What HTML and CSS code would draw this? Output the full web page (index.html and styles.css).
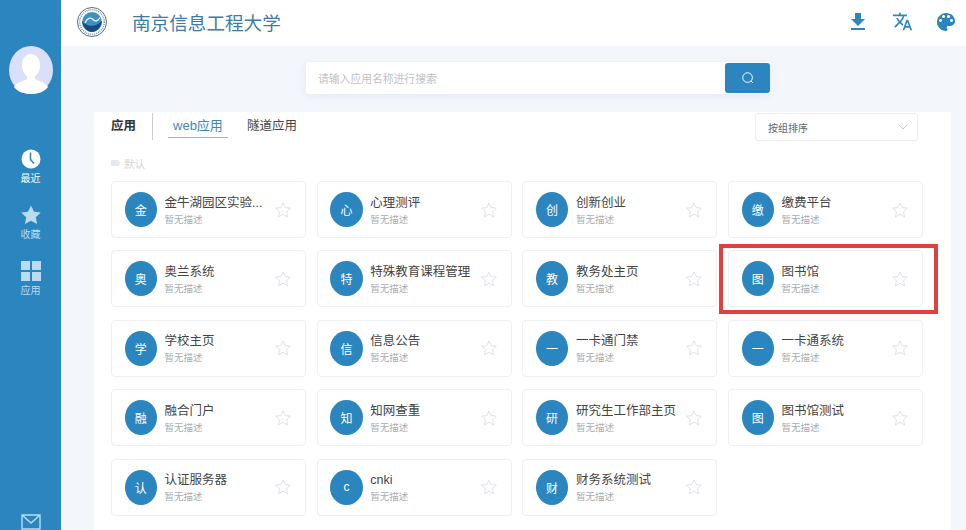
FILE: index.html
```html
<!DOCTYPE html>
<html lang="zh-CN">
<head>
  <meta charset="UTF-8" />
  <title>南京信息工程大学</title>
  <link rel="stylesheet" href="styles.css">
</head>
<body>
  <svg class="defs" width="0" height="0">
    <symbol id="star" viewBox="0 0 24 24">
      <path d="M12 2.5l2.9 6.3 6.9.8-5.1 4.7 1.4 6.8-6.1-3.4-6.1 3.4 1.4-6.8-5.1-4.7 6.9-.8z" fill="none" stroke="#dcdfe4" stroke-width="1.3" stroke-linejoin="round"/>
    </symbol>
  </svg>

  <div class="app">
    <aside class="sidebar">
      <div class="avatar">
        <svg viewBox="0 0 44 48" width="44" height="48">
          <ellipse cx="22" cy="24" rx="22" ry="24" fill="#dbe0fa"/>
          <path d="M22 8c-6 0-9 5-9 11 0 5 2 9 5 11v3c-3 2-10 3-13 8 4 5 10 7 17 7s13-2 17-7c-3-5-10-6-13-8v-3c3-2 5-6 5-11 0-6-3-11-9-11z" fill="#fff"/>
        </svg>
      </div>
      <nav class="side-nav">
        <a class="side-item">
          <svg viewBox="0 0 20 20" width="20" height="20">
            <circle cx="10" cy="10" r="9.5" fill="#fff"/>
            <path d="M9.5 3.5v7l3.5 4" fill="none" stroke="#2b86c0" stroke-width="1.5"/>
          </svg>
          <span>最近</span>
        </a>
        <a class="side-item light">
          <svg viewBox="0 0 20 20" width="20" height="20">
            <path d="M10 .5l3 6.2 6.8.9-5 4.7 1.3 6.7-6.1-3.3-6.1 3.3 1.3-6.7-5-4.7 6.8-.9z" fill="#b9dcf3"/>
          </svg>
          <span>收藏</span>
        </a>
        <a class="side-item light">
          <svg viewBox="0 0 20 20" width="20" height="20">
            <path d="M0 0h9v9H0zM11 0h9v9h-9zM0 11h9v9H0zM11 11h9v9h-9z" fill="#b9dcf3"/>
          </svg>
          <span>应用</span>
        </a>
      </nav>
      <a class="side-mail">
        <svg viewBox="0 0 20 16" width="20" height="16">
          <path d="M1 1h18v14H1zM1 1l9 8 9-8" fill="none" stroke="#b9dcf3" stroke-width="1.4"/>
        </svg>
      </a>
    </aside>

    <div class="main">
      <header class="topbar">
        <div class="brand">
          <svg class="logo" viewBox="0 0 30 30" width="30" height="30">
            <circle cx="15" cy="15" r="14.5" fill="#fff" stroke="#5a6b7b"/>
            <circle cx="15" cy="15" r="12.3" fill="none" stroke="#7f95a8" stroke-width="1.5" stroke-dasharray="1 1"/>
            <circle cx="15" cy="15" r="10" fill="#3f8fc2"/>
            <path d="M5.2 14c4 6 14 6.5 19.6 0-.6 6-4.8 11-9.8 11S5.600 20 5.200 14z" fill="#174a80"/>
            <path d="M8 16c2-5 6-6 8-3.5s5 1.500 7-2" fill="none" stroke="#e2f3fa" stroke-width="1.4"/>
          </svg>
          <h1>南京信息工程大学</h1>
        </div>
        <div class="top-icons">
          <svg viewBox="0 0 24 24" width="24" height="24"><path d="M19 9h-4V3H9v6H5l7 7 7-7zM5 18v2h14v-2H5z"/></svg>
          <svg class="translate" viewBox="0 0 24 24" width="21" height="21"><path d="M12.87 15.07l-2.54-2.51.03-.03c1.74-1.94 2.98-4.17 3.71-6.53H17V4h-7V2H8v2H1v1.99h11.17C11.5 7.92 10.44 9.75 9 11.35 8.07 10.32 7.3 9.19 6.69 8h-2c.73 1.63 1.73 3.17 2.98 4.56l-5.09 5.02L4 19l5-5 3.11 3.11.76-2.04zM18.5 10h-2L12 22h2l1.12-3h4.75L21 22h2l-4.5-12zm-2.62 7l1.62-4.33L19.12 17h-3.24z"/></svg>
          <svg viewBox="0 0 24 24" width="24" height="24"><path d="M12 3c-4.97 0-9 4.03-9 9s4.03 9 9 9c.83 0 1.5-.67 1.5-1.5 0-.39-.15-.74-.39-1.01-.23-.26-.38-.61-.38-.99 0-.83.67-1.5 1.5-1.5H16c2.76 0 5-2.24 5-5 0-4.42-4.03-8-9-8zm-5.5 9c-.83 0-1.5-.67-1.5-1.5S5.67 9 6.5 9 8 9.67 8 10.5 7.33 12 6.5 12zm3-4C8.67 8 8 7.33 8 6.5S8.67 5 9.5 5s1.5.67 1.5 1.5S10.33 8 9.5 8zm5 0c-.83 0-1.5-.67-1.5-1.5S13.67 5 14.5 5s1.5.67 1.5 1.5S15.33 8 14.5 8zm3 4c-.83 0-1.5-.67-1.5-1.5S16.67 9 17.5 9s1.5.67 1.5 1.5-.67 1.5-1.5 1.5z"/></svg>
        </div>
      </header>

      <div class="search-row">
        <div class="search-box">
          <span class="placeholder">请输入应用名称进行搜索</span>
          <button class="search-btn" type="button">
            <svg viewBox="0 0 16 16" width="14" height="14">
              <circle cx="7.5" cy="7.5" r="5.5" fill="none" stroke="#fff" stroke-width="1.1"/>
              <path d="M11.5 11.5l2 2" stroke="#fff" stroke-width="1.1"/>
            </svg>
          </button>
        </div>
      </div>

      <section class="panel">
        <div class="tabs">
          <span class="tabs-title">应用</span>
          <span class="tab active">web应用</span>
          <span class="tab">隧道应用</span>
          <div class="sort-select">
            <span>按组排序</span>
            <svg viewBox="0 0 10 6" width="10" height="6"><path d="M.5.5L5 5 9.5.5" fill="none" stroke="#c4c8ce"/></svg>
          </div>
        </div>

        <div class="group-label">
          <svg viewBox="0 0 10 6" width="10" height="6"><path d="M0 0h7l3 3-3 3H0z" fill="#e6e8eb"/></svg>
          默认
        </div>

        <div class="card-grid">
          <div class="card"><span class="badge">金</span><div class="card-text"><div class="card-title">金牛湖园区实验...</div><div class="card-desc">暂无描述</div></div><svg class="star"><use href="#star"/></svg></div>
          <div class="card"><span class="badge">心</span><div class="card-text"><div class="card-title">心理测评</div><div class="card-desc">暂无描述</div></div><svg class="star"><use href="#star"/></svg></div>
          <div class="card"><span class="badge">创</span><div class="card-text"><div class="card-title">创新创业</div><div class="card-desc">暂无描述</div></div><svg class="star"><use href="#star"/></svg></div>
          <div class="card"><span class="badge">缴</span><div class="card-text"><div class="card-title">缴费平台</div><div class="card-desc">暂无描述</div></div><svg class="star"><use href="#star"/></svg></div>

          <div class="card"><span class="badge">奥</span><div class="card-text"><div class="card-title">奥兰系统</div><div class="card-desc">暂无描述</div></div><svg class="star"><use href="#star"/></svg></div>
          <div class="card"><span class="badge">特</span><div class="card-text"><div class="card-title">特殊教育课程管理</div><div class="card-desc">暂无描述</div></div><svg class="star"><use href="#star"/></svg></div>
          <div class="card"><span class="badge">教</span><div class="card-text"><div class="card-title">教务处主页</div><div class="card-desc">暂无描述</div></div><svg class="star"><use href="#star"/></svg></div>
          <div class="card highlighted"><span class="badge">图</span><div class="card-text"><div class="card-title">图书馆</div><div class="card-desc">暂无描述</div></div><svg class="star"><use href="#star"/></svg></div>

          <div class="card"><span class="badge">学</span><div class="card-text"><div class="card-title">学校主页</div><div class="card-desc">暂无描述</div></div><svg class="star"><use href="#star"/></svg></div>
          <div class="card"><span class="badge">信</span><div class="card-text"><div class="card-title">信息公告</div><div class="card-desc">暂无描述</div></div><svg class="star"><use href="#star"/></svg></div>
          <div class="card"><span class="badge">一</span><div class="card-text"><div class="card-title">一卡通门禁</div><div class="card-desc">暂无描述</div></div><svg class="star"><use href="#star"/></svg></div>
          <div class="card"><span class="badge">一</span><div class="card-text"><div class="card-title">一卡通系统</div><div class="card-desc">暂无描述</div></div><svg class="star"><use href="#star"/></svg></div>

          <div class="card"><span class="badge">融</span><div class="card-text"><div class="card-title">融合门户</div><div class="card-desc">暂无描述</div></div><svg class="star"><use href="#star"/></svg></div>
          <div class="card"><span class="badge">知</span><div class="card-text"><div class="card-title">知网查重</div><div class="card-desc">暂无描述</div></div><svg class="star"><use href="#star"/></svg></div>
          <div class="card"><span class="badge">研</span><div class="card-text"><div class="card-title">研究生工作部主页</div><div class="card-desc">暂无描述</div></div><svg class="star"><use href="#star"/></svg></div>
          <div class="card"><span class="badge">图</span><div class="card-text"><div class="card-title">图书馆测试</div><div class="card-desc">暂无描述</div></div><svg class="star"><use href="#star"/></svg></div>

          <div class="card"><span class="badge">认</span><div class="card-text"><div class="card-title">认证服务器</div><div class="card-desc">暂无描述</div></div><svg class="star"><use href="#star"/></svg></div>
          <div class="card"><span class="badge">c</span><div class="card-text"><div class="card-title">cnki</div><div class="card-desc">暂无描述</div></div><svg class="star"><use href="#star"/></svg></div>
          <div class="card"><span class="badge">财</span><div class="card-text"><div class="card-title">财务系统测试</div><div class="card-desc">暂无描述</div></div><svg class="star"><use href="#star"/></svg></div>
        </div>
      </section>
    </div>
  </div>
</body>
</html>
```

FILE: styles.css
```css
* {
  box-sizing: border-box;
}

html,
body {
  margin: 0;
  padding: 0;
  height: 100%;
  overflow: hidden;
}

body {
  font-family: "Liberation Sans", "Noto Sans CJK SC", sans-serif;
  background: #f3f6fb;
  color: #444;
}

.defs {
  position: absolute;
}

.app {
  display: flex;
  height: 530px;
  overflow: hidden;
}

/* sidebar */
.sidebar {
  width: 61px;
  flex-shrink: 0;
  background: #2b86c0;
  display: flex;
  flex-direction: column;
  align-items: center;
  padding-top: 46px;
}

.avatar {
  height: 48px;
  width: 44px;
}

.side-nav {
  display: flex;
  flex-direction: column;
  gap: 19px;
  margin-top: 55px;
}

.side-item {
  display: flex;
  flex-direction: column;
  align-items: center;
  gap: 3px;
  font-size: 10px;
  line-height: 14px;
  color: #fff;
}

.side-item.light {
  color: #b9dcf3;
}

.side-mail {
  margin-top: 216px;
  height: 16px;
}

/* header */
.main {
  flex: 1;
  min-width: 0;
}

.topbar {
  height: 46px;
  background: #fff;
  display: flex;
  align-items: center;
  justify-content: space-between;
  padding: 0 8px 3px 16px;
}

.brand {
  display: flex;
  align-items: center;
  gap: 25px;
}

.logo {
  display: block;
}

.brand h1 {
  margin: 0;
  font-size: 18.6px;
  font-weight: 400;
  color: #3e7ba8;
}

.top-icons {
  display: flex;
  align-items: center;
  gap: 20px;
}

.top-icons svg {
  fill: #2b86c0;
  display: block;
}

.top-icons .translate {
  margin: 0 1.5px;
}

/* search */
.search-row {
  height: 66px;
  padding: 16px 0 0 245px;
}

.search-box {
  width: 464px;
  height: 32px;
  background: #fff;
  border-radius: 3px;
  box-shadow: 0 2px 8px rgba(120, 140, 180, 0.12);
  display: flex;
  align-items: center;
  justify-content: space-between;
  padding-left: 12px;
}

.placeholder {
  font-size: 10.8px;
  color: #bfc2c7;
}

.search-btn {
  width: 45px;
  height: 30px;
  border: none;
  border-radius: 3px;
  background: #2b86c0;
  display: flex;
  align-items: center;
  justify-content: center;
  padding: 0;
}

/* panel */
.panel {
  margin-left: 33px;
  margin-right: 15px;
  height: 420px;
  background: #fff;
  padding: 0 17px;
}

.tabs {
  height: 30px;
  display: flex;
  align-items: flex-start;
  padding-top: 1px;
  font-size: 12.5px;
  color: #444;
}

.tabs-title {
  font-weight: 700;
  padding-right: 16px;
  height: 27px;
  line-height: 27px;
  border-right: 1px solid #c9cdd2;
  color: #333;
}

.tab {
  height: 25px;
  line-height: 26px;
  margin-right: 19px;
}

.tab.active {
  margin-left: 15px;
  padding: 0 5px;
  color: #3e87b5;
  border-bottom: 1px solid #8fb8c9;
  font-size: 13px;
}

.sort-select {
  margin-left: auto;
  margin-right: 16px;
  width: 163px;
  height: 28px;
  border: 1px solid #eceef1;
  border-radius: 3px;
  display: flex;
  align-items: center;
  justify-content: space-between;
  padding: 0 9px 0 12px;
  font-size: 10px;
  color: #666;
}

.group-label {
  display: flex;
  align-items: center;
  gap: 3px;
  height: 22px;
  margin-top: 10px;
  font-size: 10.5px;
  color: #d3d5d9;
}

.card-grid {
  display: grid;
  grid-template-columns: repeat(4, 195px);
  grid-auto-rows: 57px;
  column-gap: 10.7px;
  row-gap: 12.4px;
  margin-top: 7px;
}

.card {
  display: flex;
  align-items: center;
  padding: 0 13px 0 12.5px;
  border: 1px solid #eff0f3;
  border-radius: 4px;
  background: #fff;
}

.card.highlighted {
  position: relative;
}

/* the red box drawn over the screenshot */
.card.highlighted::after {
  content: "";
  position: absolute;
  left: -10px;
  right: -16px;
  top: -7px;
  bottom: -8px;
  border: 4px solid #e0403f;
}

.badge {
  width: 32.5px;
  height: 35px;
  border-radius: 50%;
  flex-shrink: 0;
  background: #2b86c0;
  color: #fff;
  font-size: 12px;
  display: flex;
  align-items: center;
  justify-content: center;
}

.card-text {
  flex: 1;
  min-width: 0;
  margin-left: 7.5px;
  padding-top: 2px;
}

.card-title {
  font-size: 12.5px;
  line-height: 17px;
  color: #444;
  white-space: nowrap;
}

.card-desc {
  font-size: 9.5px;
  line-height: 14px;
  margin-top: 1px;
  color: #a9acb1;
}

.star {
  width: 18px;
  height: 18px;
  flex-shrink: 0;
}
```
